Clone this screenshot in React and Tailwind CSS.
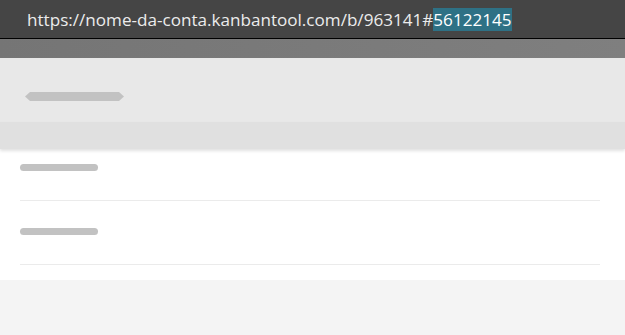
export default function App() {
  const bar = "bg-[#c2c2c2] rounded-full";
  return (
    <div className="w-[625px] h-[335px] overflow-hidden bg-[#f4f4f4] flex flex-col">
      <div className="h-[39px] bg-[#454545] border-b border-black flex items-center pl-[27px] shrink-0">
        <span className="text-[17.1px] text-[#ececec] leading-[25px] whitespace-nowrap" style={{ fontFamily: '"Open Sans", "Noto Sans", sans-serif' }}>
          https://nome-da-conta.kanbantool.com/b/963141#<span className="bg-[#2e7185] text-white">56122145</span>
        </span>
      </div>
      <div className="h-[19px] bg-gradient-to-r from-[#757575] to-[#7f7f7f] shrink-0" />
      <div className="h-[64px] bg-[#e8e8e8] flex items-center pl-[25px] shrink-0">
        <div className="w-[99px] h-[9px] bg-[#c2c2c2] [clip-path:polygon(5px_0,94px_0,99px_50%,94px_100%,5px_100%,0_50%)] mt-[13px]" />
      </div>
      <div className="h-[27px] bg-[#e0e0e0] shrink-0 shadow-[0_2px_3px_rgba(0,0,0,0.12)] relative z-10" />
      <div className="bg-white pl-[20px] pr-[25px] shrink-0">
        <div className="pt-[15px] pb-[29px] border-b border-[#ebebeb]">
          <div className={`w-[78px] h-[7px] ${bar}`} />
        </div>
        <div className="pt-[27px] pb-[29px] border-b border-[#ebebeb]">
          <div className={`w-[78px] h-[7px] ${bar}`} />
        </div>
        <div className="h-[15px]" />
      </div>
    </div>
  );
}
